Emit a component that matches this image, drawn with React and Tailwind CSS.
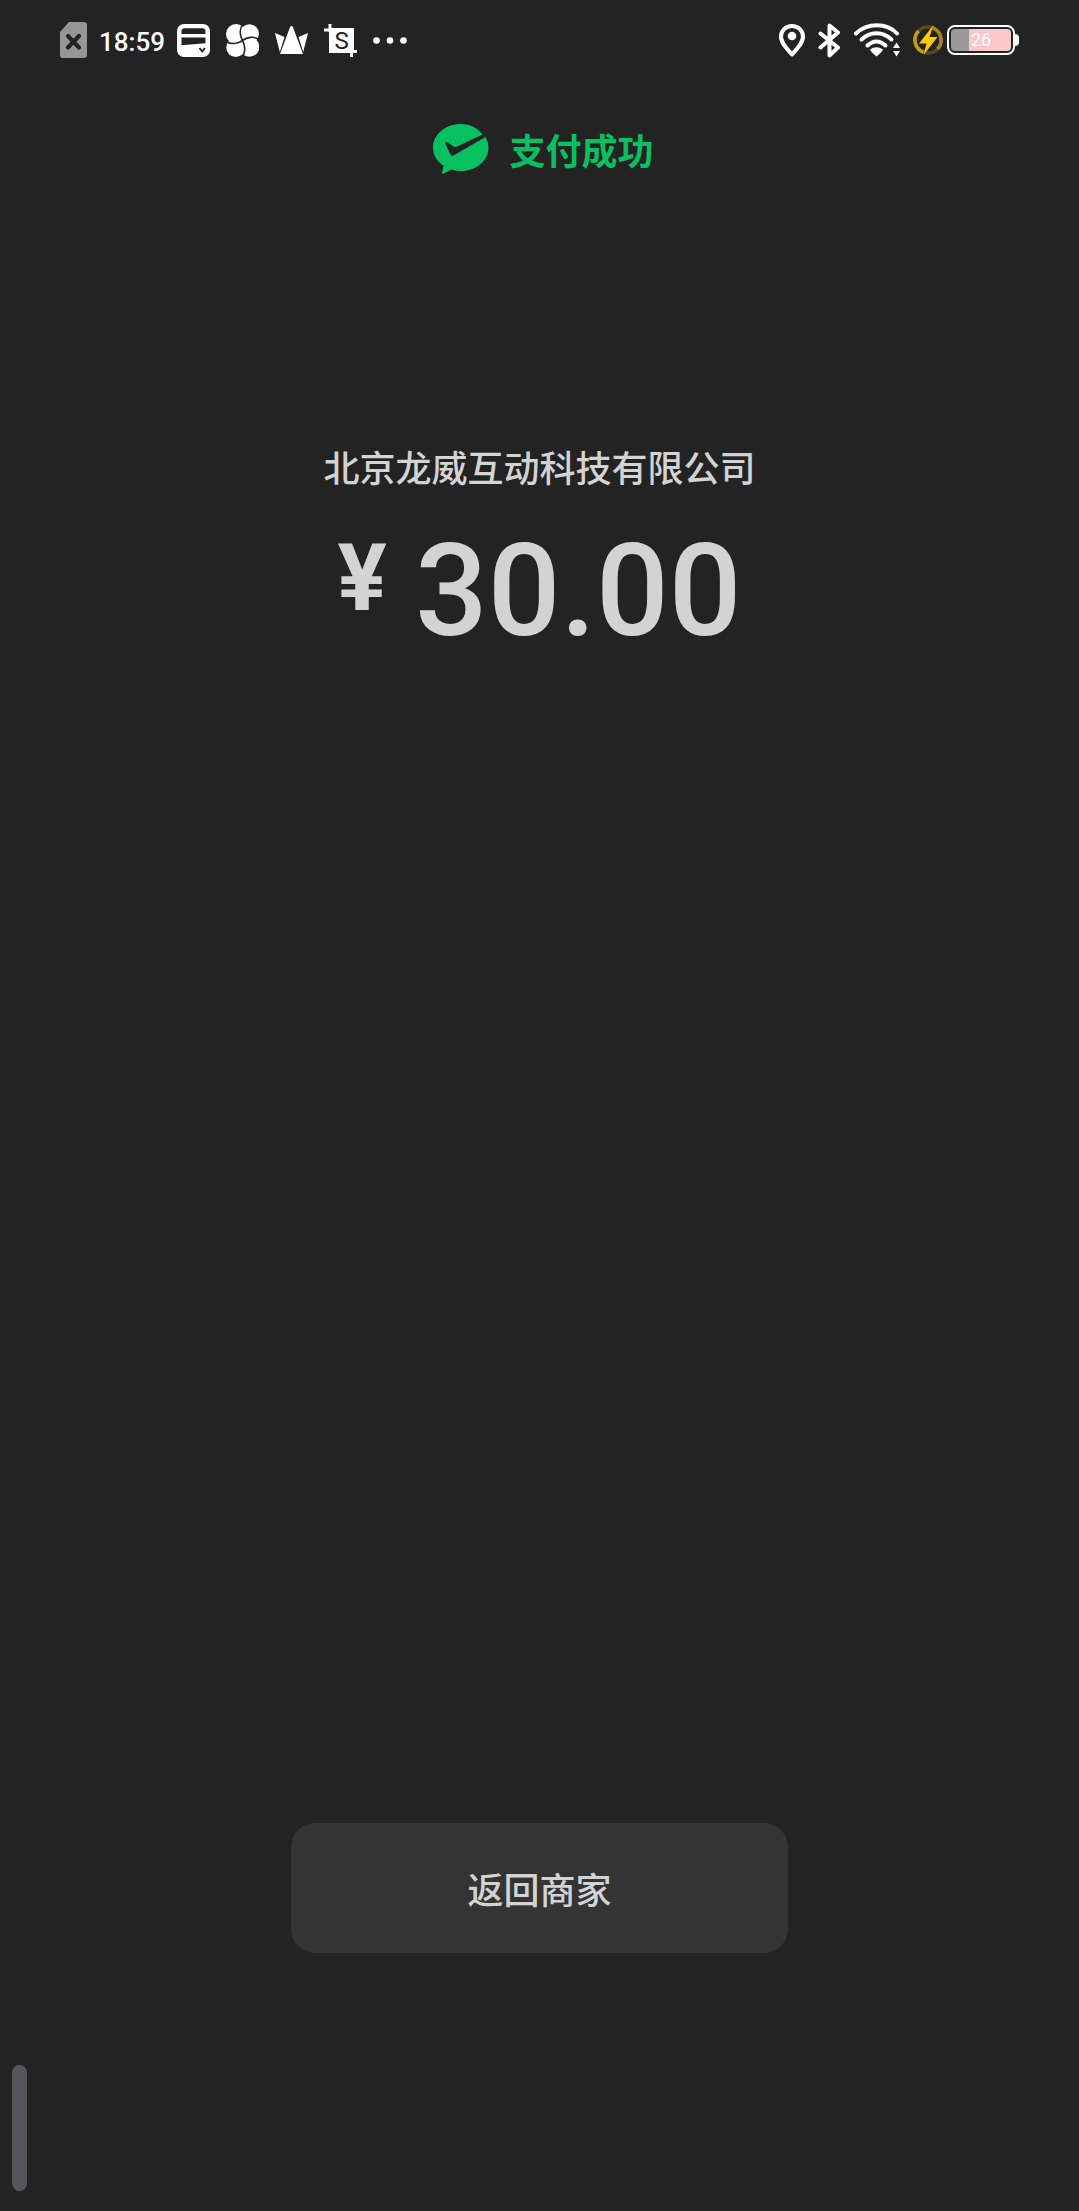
import React from "react";

const SimIcon = () => (
  <svg width="27" height="36" viewBox="0 0 27 36" aria-hidden="true">
    <path d="M9 0H24a3 3 0 0 1 3 3V33a3 3 0 0 1-3 3H3a3 3 0 0 1-3-3V10Z" fill="#969696" />
    <path d="M8 14 19 25.500M19 14 8 25.500" stroke="#232323" strokeWidth="4.200" strokeLinecap="round" />
  </svg>
);

const CardIcon = () => (
  <svg width="33" height="33" viewBox="0 0 33 33" aria-hidden="true">
    <rect width="33" height="33" rx="7" fill="#fff" />
    <path d="M4.500 10V7.500Q4.500 4.300 7.500 4.300H25.500Q28.500 4.300 28.500 7.500V10Z" fill="#232323" />
    <path d="M4.500 13.500H28.500V19.300L4.500 21.300Z" fill="#232323" />
    <path d="M22.500 24 25.200 27.500 28 24" fill="none" stroke="#232323" strokeWidth="2" />
  </svg>
);

const PetalsIcon = () => (
  <svg width="33" height="33" viewBox="0 0 33 33" aria-hidden="true">
    <g fill="#fff">
      <circle cx="10" cy="10" r="10" />
      <circle cx="23.500" cy="23" r="9.800" />
      <circle cx="9.800" cy="23.500" r="9.500" />
      <circle cx="23.500" cy="9.800" r="9.500" />
    </g>
    <path
      d="M17.500 0C13 4 13.500 11 16.500 16.500C19.500 22 20 29 15.500 33M0 17.500C5 20.500 12 20 16.500 16.500C21 13 28 12 33 15.500"
      fill="none"
      stroke="#232323"
      strokeWidth="1.600"
    />
  </svg>
);

const CrownIcon = () => (
  <svg width="33" height="28" viewBox="0 0 33 28" aria-hidden="true">
    <path d="M0 7 9.500 11 4.800 26Z" fill="#fff" />
    <path d="M33 7 23.500 11 28.200 26Z" fill="#fff" />
    <path d="M16.500 0Q17.500 0 18 1.200L28 28H5L15 1.200Q15.500 0 16.500 0Z" fill="#fff" />
  </svg>
);

const CropIcon = () => (
  <svg width="33" height="33" viewBox="0 0 33 33" aria-hidden="true">
    <path d="M5 4H30V29H5Z" fill="#fff" />
    <path d="M6 0V8M0 6H8M27.500 25V33M25 27.500H33" stroke="#fff" strokeWidth="3" />
    <text x="17.500" y="25" fontFamily="Roboto, sans-serif" fontSize="24" fontWeight="400" textAnchor="middle" fill="#232323">
      S
    </text>
  </svg>
);

const DotsIcon = () => (
  <svg width="34" height="7" viewBox="0 0 34 7" fill="#fff" aria-hidden="true">
    <circle cx="3.500" cy="3.500" r="3.300" />
    <circle cx="17" cy="3.500" r="3.300" />
    <circle cx="30.500" cy="3.500" r="3.300" />
  </svg>
);

const PinIcon = () => (
  <svg width="26" height="33" viewBox="0 0 26 33" aria-hidden="true">
    <path
      d="M13 2C6.500 2 2 6.700 2 12.500C2 19 8 25 13 30.500C18 25 24 19 24 12.500C24 6.700 19.500 2 13 2Z"
      fill="none"
      stroke="#fff"
      strokeWidth="4"
      strokeLinejoin="round"
    />
    <circle cx="13" cy="12" r="4.300" fill="#fff" />
  </svg>
);

const BluetoothIcon = () => (
  <svg width="23" height="35" viewBox="0 0 23 35" aria-hidden="true">
    <path
      d="M2.500 10.500 20 24.500 11.500 32.500V2.500L20 9.500 2.500 24.500"
      fill="none"
      stroke="#fff"
      strokeWidth="4"
      strokeLinecap="round"
      strokeLinejoin="round"
    />
  </svg>
);

const WifiIcon = () => (
  <svg width="46" height="34" viewBox="0 0 46 34" aria-hidden="true">
    <g fill="none" stroke="#fff" strokeWidth="4" strokeLinecap="round">
      <path d="M2 10.500C13 -.500 33 -.500 43 10.500" />
      <path d="M7.500 16.500C16 8 29 8 37.500 16.500" />
      <path d="M13.500 22.500C19 17 26 17 31.500 22.500" />
    </g>
    <path d="M16 26.500Q22.500 22 29 26.500Q28.500 28.500 22.500 33.500Q16.500 28.500 16 26.500Z" fill="#fff" />
    <path d="M42.500 19.500 46 25H39ZM42.500 33.500 46 28H39Z" fill="#fff" />
  </svg>
);

const ChargeIcon = () => (
  <svg width="30" height="30" viewBox="0 0 30 30" aria-hidden="true">
    <g fill="none" strokeWidth="3.500">
      <circle cx="15" cy="15" r="13" stroke="#5b4a14" />
      <path d="M19.500 2.800A13 13 0 0 1 24.500 24" stroke="#a8851a" />
      <path d="M10.500 27.200A13 13 0 0 1 5.500 6" stroke="#c79c12" />
    </g>
    <path d="M20.500 0 16.500 12H24.500L10.500 30 13.500 18.500H6Z" fill="#fc0" />
  </svg>
);

const Battery = ({ level }) => (
  <div className="flex items-center">
    <div className="h-[30px] w-[68px] rounded-lg border-2 border-white p-[2px]">
      <div
        className="flex h-full items-center justify-center rounded-sm text-[18px] leading-none text-white"
        style={{ background: `linear-gradient(to right, #999 ${level + 4}%, #fac8ca ${level + 4}%)` }}
      >
        {level}
      </div>
    </div>
    <div className="h-3 w-1 rounded-r-sm bg-white" />
  </div>
);

const StatusBar = () => (
  <div className="flex h-20 items-center justify-between px-[60px] font-['Roboto',sans-serif] text-white">
    <div className="flex items-center gap-3">
      <SimIcon />
      <time className="pt-1 text-[26px] font-medium leading-none">18:59</time>
      <div className="flex items-center gap-4">
        <CardIcon />
        <PetalsIcon />
        <CrownIcon />
        <CropIcon />
        <DotsIcon />
      </div>
    </div>
    <div className="flex items-center gap-[13px]">
      <PinIcon />
      <BluetoothIcon />
      <WifiIcon />
      <div className="flex items-center gap-1">
        <ChargeIcon />
        <Battery level={26} />
      </div>
    </div>
  </div>
);

const PayLogo = () => (
  <svg width="56" height="50" viewBox="0 0 56 50" aria-hidden="true">
    <path
      d="M28 0C12.500 0 0 10.500 0 23.500C0 31 4 37.500 10.500 41.800L9 48.500Q9 50.300 10.800 49.500L18.500 45.500Q23 47 28 47C43 47 55.500 36.500 55.500 23.500Q55.500 18 52.500 13L20.500 31.500Q18.500 32.500 17.500 30.500L12.500 20Q12 17 15 18.500L20.500 22.500Q22 23.300 24 22.500L49.500 10.500C44.500 4 37 0 28 0Z"
      fill="#07c160"
    />
  </svg>
);

const App = () => {
  return (
    <div className="relative flex min-h-screen flex-col bg-[#232323] font-['Noto_Sans_CJK_SC',sans-serif] text-[#d3d3d3]">
      <StatusBar />

      <main className="flex flex-1 flex-col items-center pt-11 pb-[258px]">
        <div className="flex items-center gap-5 pl-2 text-[#07c160]">
          <PayLogo />
          <h1 className="text-[36px] font-bold leading-[48px]">支付成功</h1>
        </div>

        <p className="mt-[268px] text-[36px] font-medium leading-[48px]">北京龙威互动科技有限公司</p>
        <div className="mt-9 flex items-start gap-7 font-['Roboto',sans-serif] font-medium">
          <span className="text-[92px] font-bold leading-[106px]">¥</span>
          <span className="text-[128px] leading-[130px]">30.00</span>
        </div>

        <button type="button" className="mt-auto h-[130px] w-[46%] rounded-3xl bg-[#343434] text-[36px] font-medium">
          返回商家
        </button>
      </main>

      {/* edge handle */}
      <div className="absolute bottom-5 left-3 h-[126px] w-[15px] rounded-full bg-[#55555b]" />
    </div>
  );
};

export default App;
